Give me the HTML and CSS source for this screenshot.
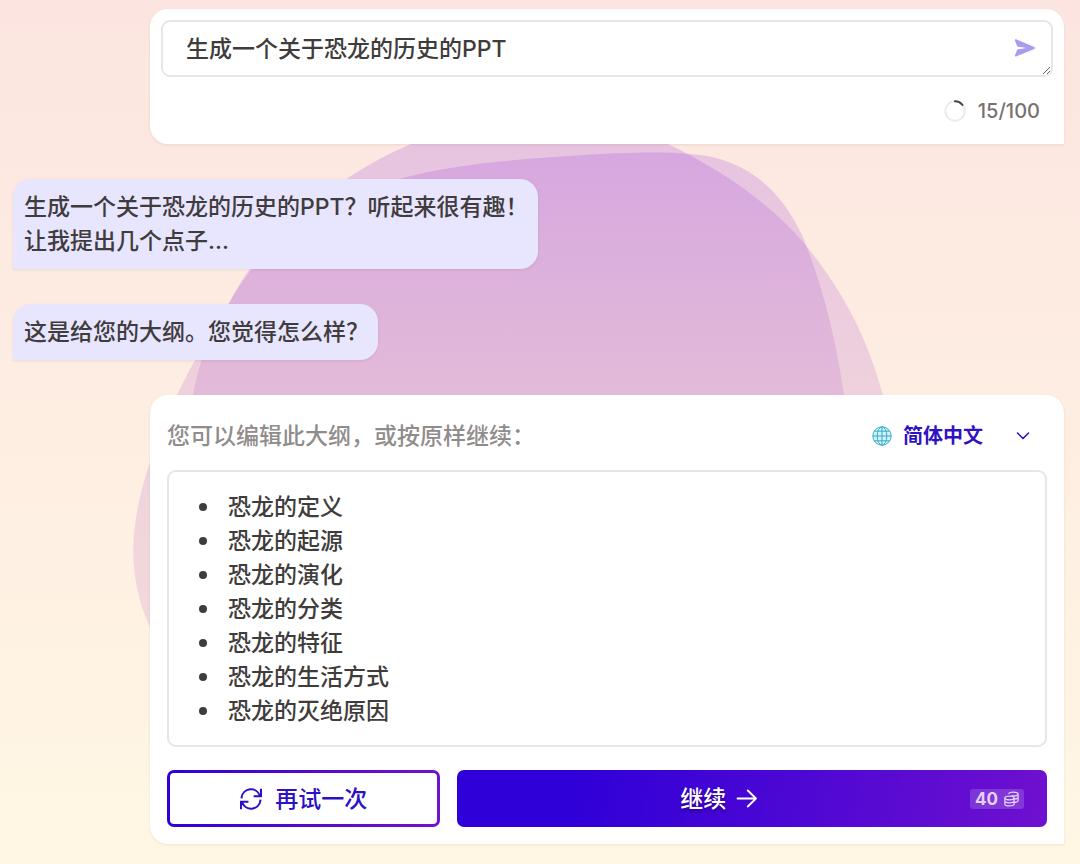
FILE: index.html
```html
<!DOCTYPE html>
<html lang="zh-CN">
<head>
<meta charset="utf-8">
<meta name="viewport" content="width=device-width, initial-scale=1">
<title>恐龙的历史</title>
<link rel="stylesheet" href="styles.css">
</head>
<body>
<svg class="backdrop" viewBox="0 0 1080 864" preserveAspectRatio="xMidYMin slice" aria-hidden="true">
  <defs>
    <linearGradient id="blob" gradientUnits="userSpaceOnUse" x1="0" y1="150" x2="0" y2="620">
      <stop offset="0" stop-color="rgb(157,72,222)" stop-opacity=".23"/>
      <stop offset=".52" stop-color="rgb(179,96,200)" stop-opacity=".2"/>
      <stop offset="1" stop-color="rgb(190,116,181)" stop-opacity=".2"/>
    </linearGradient>
  </defs>
  <path fill="url(#blob)" d="M193 395C202 350 213 328 229 303C250 262 282 224 342 182C370 163 390 153 411 144C490 112 590 112 668 144C715 167 765 198 803 242C843 290 867 337 883 395C905 480 890 600 800 660C650 740 380 740 260 660C190 600 175 480 193 395Z"/>
  <path fill="url(#blob)" d="M177 395C196 356 213 328 229 303C268 236 320 197 403 178C460 162 550 157 600 154C650 152 690 151 720 159C758 171 783 195 803 237C824 290 836 340 844 395C858 500 850 620 760 690C600 760 320 760 220 700C185 680 163 655 149 625C128 577 128 530 149 465C156 440 166 417 177 395Z"/>
</svg>
<main class="chat">
  <section class="card prompt">
    <div class="prompt-box">
      <textarea class="prompt-input" rows="1" aria-label="主题">生成一个关于恐龙的历史的PPT</textarea>
      <button class="send" type="button" aria-label="发送">
        <svg width="22" height="20" viewBox="0 0 22 20"><path d="M2 1.2 20.3 9.1Q21.6 10 20.3 10.9L2 18.5Q.7 18.8 .9 17.4L3.3 11.4 12.5 9.9 3.3 8.4 .9 2.4Q.8 .9 2 1.2Z" fill="#a99bee"/></svg>
      </button>
    </div>
    <div class="counter">
      <svg width="22" height="22" viewBox="0 0 22 22" fill="none" stroke-width="2"><circle cx="11" cy="11" r="9.7" stroke="#ebebeb"/><path d="M11 1.3A9.7 9.7 0 0 1 18.5 5" stroke="#444" stroke-linecap="round"/></svg>
      <span>15/100</span>
    </div>
  </section>
  <p class="bubble">生成一个关于恐龙的历史的PPT？听起来很有趣！<br>让我提出几个点子...</p>
  <p class="bubble">这是给您的大纲。您觉得怎么样？</p>
  <section class="card outline">
    <header class="outline-head">
      <span class="hint">您可以编辑此大纲，或按原样继续：</span>
      <label class="language">
        <svg width="20" height="20" viewBox="0 0 20 20" fill="none" stroke="#35adc9" aria-hidden="true"><circle cx="10" cy="10" r="9.2" fill="#d2f1f8"/><ellipse cx="10" cy="10" rx="4.8" ry="9.2"/><path d="M10 1v18M1 10h18M2.5 5.2h15M2.5 14.8h15"/></svg>
        <select class="language-select" aria-label="语言"><option>简体中文</option></select>
        <svg width="14" height="8" viewBox="0 0 14 8" fill="none" stroke="#3012c4" stroke-width="1.6" stroke-linecap="round" stroke-linejoin="round" aria-hidden="true"><path d="M1.5 1 7 6.5 12.5 1"/></svg>
      </label>
    </header>
    <div class="editor" contenteditable="true" role="textbox" aria-label="大纲" spellcheck="false">
      <ul class="topics">
        <li>恐龙的定义</li>
        <li>恐龙的起源</li>
        <li>恐龙的演化</li>
        <li>恐龙的分类</li>
        <li>恐龙的特征</li>
        <li>恐龙的生活方式</li>
        <li>恐龙的灭绝原因</li>
      </ul>
    </div>
    <div class="actions">
      <button class="btn retry" type="button">
        <svg width="24" height="24" viewBox="0 0 24 24" fill="none" stroke="currentColor" stroke-width="2" stroke-linecap="square"><path d="M2.6 10.5A9.4 9.4 0 0 1 20.8 8.6M22 2.8V9.3H15.6M21.4 13.5A9.4 9.4 0 0 1 3.2 15.4M2 21.2V14.7H8.4"/></svg>
        再试一次
      </button>
      <button class="btn continue" type="button">
        <span class="continue-label">继续
          <svg width="22" height="20" viewBox="0 0 22 20" fill="none" stroke="currentColor" stroke-width="1.8" stroke-linecap="round" stroke-linejoin="round"><path d="M1.500 9.500H20M11.800 1.500l8.200 8-8.200 8"/></svg>
        </span>
        <span class="cost">40
          <svg width="15" height="16" viewBox="0 0 15 16" fill="none" stroke="currentColor" stroke-width="1.3"><ellipse cx="5.500" cy="7" rx="4.600" ry="1.800"/><path d="M.9 7v6.200c0 2.300 9.200 2.300 9.200 0V7M.9 10.100c0 2.300 9.200 2.300 9.200 0M4.800 3C4.800 .5 14.100 .5 14.100 3S9.500 5.200 7.500 4.500M14.100 3v6.800Q13.800 11 10.300 11.500M14.100 6.400Q13.800 7.700 10.300 8.200"/></svg>
        </span>
      </button>
    </div>
  </section>
</main>
</body>
</html>
```
FILE: styles.css
```css
* {
  box-sizing: border-box;
}

body {
  margin: 0;
  min-height: 100vh;
  background: linear-gradient(#fce5e0, #feeee2 50%, #fff7e4);
  color: #403c3c;
  font: 500 23px/34px Inter, "Noto Sans CJK SC", sans-serif;
}

button,
select,
textarea {
  font: inherit;
  color: inherit;
}

svg {
  flex: none;
}

.backdrop {
  position: absolute;
  inset: 0;
  width: 100%;
  height: 100%;
  z-index: -1;
}

.chat {
  display: flex;
  flex-direction: column;
  align-items: flex-start;
  gap: 35px;
  padding: 9px 16px 20px 13px;
}

.card {
  align-self: stretch;
  margin-left: 137px;
  background: #fff;
  border-radius: 18px 18px 0 18px;
  box-shadow: 0 1px 3px rgb(0 0 0 / 8%);
}

.prompt {
  padding: 11px 11px 16px;
}

.prompt-box {
  position: relative;
  display: flex;
}

.prompt-input {
  flex: 1;
  height: 57px;
  padding: 10px 64px 10px 23px;
  border: 2px solid #e6e6e6;
  border-radius: 9px;
  background: #fff;
  outline: none;
  overflow: hidden;
  resize: vertical;
}

.send {
  position: absolute;
  top: 18px;
  right: 17px;
  display: flex;
  padding: 0;
  border: 0;
  background: none;
}

.counter {
  display: flex;
  align-items: center;
  justify-content: flex-end;
  gap: 12px;
  padding: 17px 13px 0 0;
  color: #777272;
  font-size: 20px;
}

.bubble {
  margin: 0;
  padding: 11px 9px 11px 11px;
  background: #e8e5ff;
  border-radius: 18px 18px 18px 0;
  box-shadow: 0 1px 3px rgb(0 0 0 / 8%);
}

.outline {
  padding: 17px;
}

.outline-head {
  display: flex;
  align-items: center;
  justify-content: space-between;
  padding: 7px 17px 17px 0;
}

.hint {
  color: #918c8c;
}

.language {
  display: flex;
  align-items: center;
  gap: 11px;
  color: #3012c4;
}

.language-select {
  appearance: none;
  width: 102px;
  padding: 0;
  border: 0;
  background: none;
  font-size: 20px;
  font-weight: 700;
}

.editor {
  padding: 18px 24px 17px;
  border: 2px solid #e6e6e6;
  border-radius: 9px;
  outline: none;
}

.topics {
  margin: 0;
  padding-left: 6px;
  list-style: none;
}

.topics li {
  display: flex;
  align-items: center;
  gap: 21px;
}

.topics li::before {
  content: "";
  width: 8px;
  height: 8px;
  border-radius: 50%;
  background: currentColor;
}

.actions {
  display: grid;
  grid-template-columns: 6fr 13fr;
  gap: 17px;
  padding-top: 23px;
}

.btn {
  display: flex;
  align-items: center;
  justify-content: center;
  gap: 12px;
  height: 57px;
  border: 0;
  border-radius: 7px;
}

.retry {
  border: 3px solid transparent;
  background:
    linear-gradient(#fff, #fff) padding-box,
    linear-gradient(100deg, #2f00d6, #7412cc) border-box;
  color: #2c0fc6;
}

.continue {
  gap: 0;
  padding: 0 23px 0 12px;
  background: linear-gradient(100deg, #2f00d8 20%, #6f10cf);
  color: #fff;
}

.continue-label {
  flex: 1;
  display: flex;
  align-items: center;
  justify-content: center;
  gap: 10px;
  text-shadow: 0 2px 3px rgb(0 0 0 / 40%);
}

.cost {
  display: flex;
  align-items: center;
  gap: 6px;
  padding: 0 5px;
  border-radius: 3px;
  background: rgb(255 255 255 / 17%);
  color: #e2d3f7;
  font-size: 17px;
  font-weight: 700;
  line-height: 20px;
}
```
